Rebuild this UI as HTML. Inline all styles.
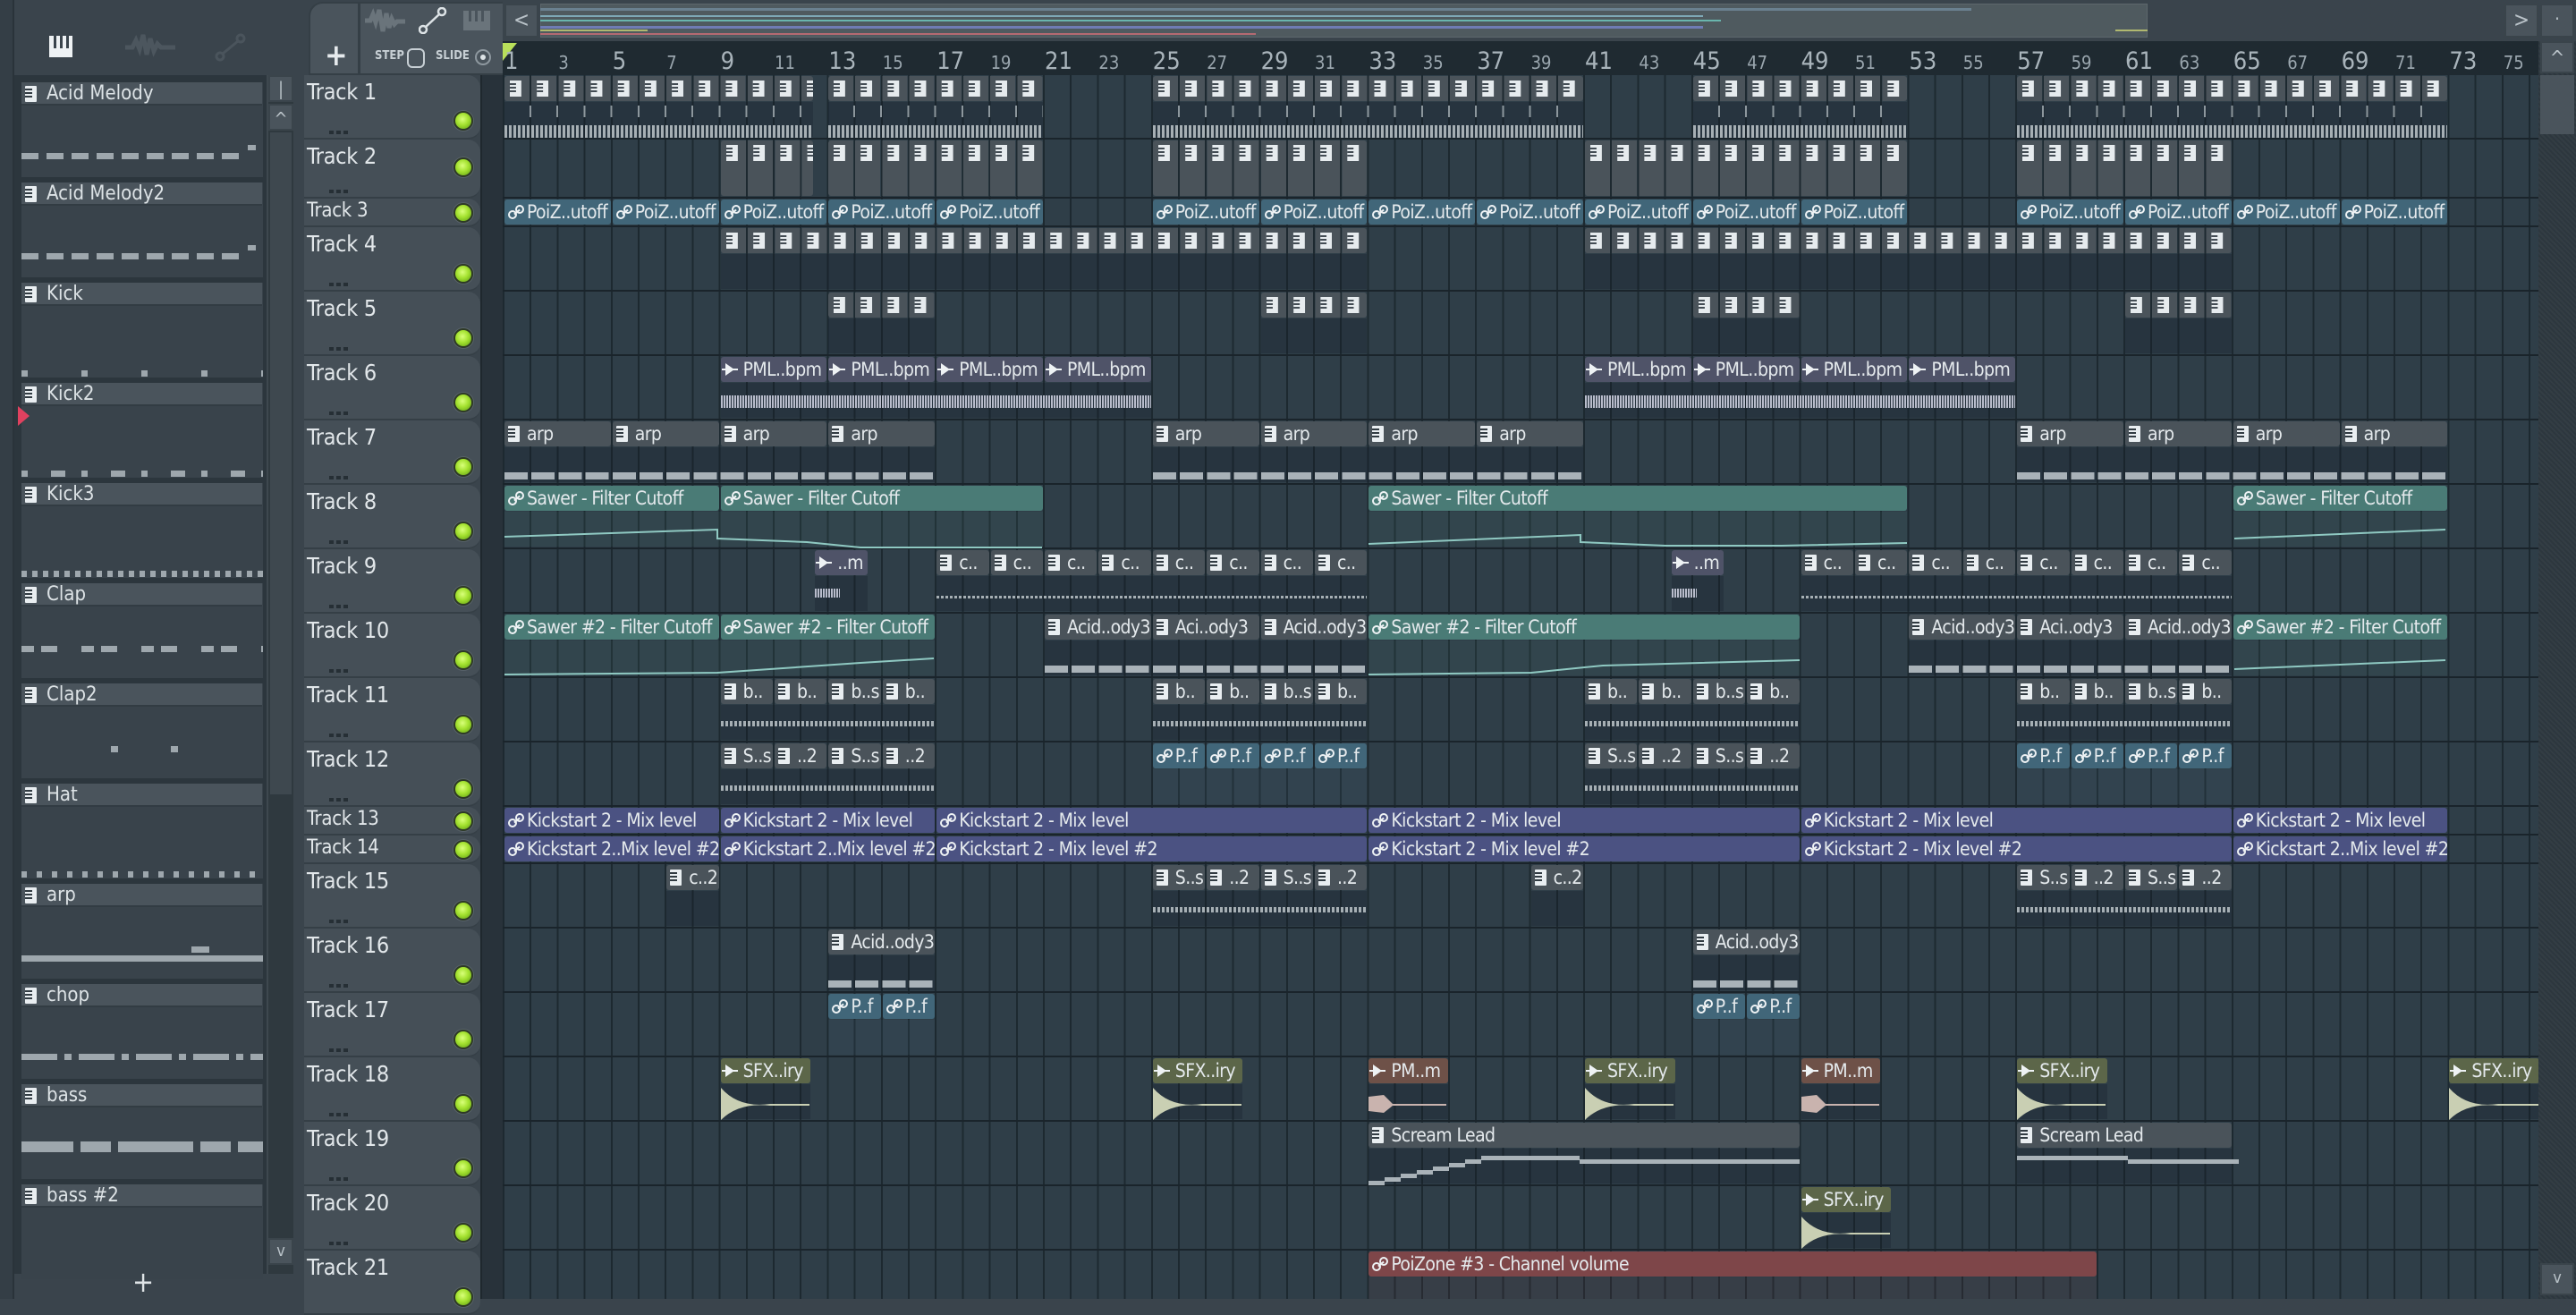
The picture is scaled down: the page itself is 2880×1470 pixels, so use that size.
<!DOCTYPE html>
<html><head><meta charset="utf-8">
<style>
*{box-sizing:border-box;margin:0;padding:0}
body{width:2880px;height:1452px;overflow:hidden;background:#3a444c;font-family:"Liberation Sans Narrow","DejaVu Sans Condensed","Liberation Sans",sans-serif;color:#dfe4e7;position:relative}
.abs{position:absolute}
#lp{left:0;top:0;width:335px;height:1452px;background:#3a444c}
#lp .edge{left:0;top:0;width:16px;height:1452px;background:#343e46;border-right:2px solid #2a333a}
#chan{left:16px;top:84px;width:282px;height:1340px;background:#2c363d}
.ch{position:absolute;left:8px;width:270px;height:106px;background:#39434b}
.ch .h{position:absolute;left:0;top:0;width:269px;height:26px;background:#4a545c;border-bottom:2px solid #323c43;font-size:22px;line-height:25px;padding-left:28px;color:#dde3e6}
.pi{position:absolute;left:4px;top:4px;width:13px;height:18px;background:#e9eef1;border-radius:1px}
.pi::before{content:"";position:absolute;left:0;top:3px;width:8px;height:12px;background:repeating-linear-gradient(#313b42 0 2px,transparent 2px 4px)}
.nt{position:absolute;left:0;height:7px}
#sb{left:298px;top:84px;width:30px;height:1340px;background:#2f393f;border-left:2px solid #3e484f}
.btn{position:absolute;background:#4a545c;border:2px solid #3a444b;color:#b9c2c8;text-align:center}
.th{position:absolute;left:340px;width:197px;background:#454f57;border-radius:0 14px 14px 0;border-bottom:2px solid #353f46}
.th span{position:absolute;left:3px;top:4px;font-size:25px;color:#e2e7ea;letter-spacing:-.3px}
.th.s span{top:1px;font-size:22px}
.led{position:absolute;left:507px;width:22px;height:22px;border-radius:50%;background:radial-gradient(circle at 45% 40%,#d9ff7a 0,#a4e230 45%,#5c9a12 100%);border:2px solid #2e3a26;box-shadow:0 0 0 1px #58626a}
.dots{position:absolute;left:28px;width:22px;height:4px;background:repeating-linear-gradient(90deg,#262f35 0 5px,transparent 5px 8px)}
#gap{left:537px;top:84px;width:25px;height:1368px;background:#28323a;border-left:2px solid #1f282e}
#grid{left:562px;top:84px;width:2276px;height:1368px;overflow:hidden;background:repeating-linear-gradient(90deg,#1d2930 0 2px,#2f3e48 2px 30.2px)}
.r{position:absolute;left:0;width:2276px;border-bottom:2px solid #1a242b}
.c{position:absolute;left:calc((var(--a) - 1)*30.2px + 2px);width:calc((var(--b) - var(--a))*30.2px - 2px);top:1px;height:28px;border-radius:3px;font-size:21px;line-height:28px;white-space:nowrap;overflow:hidden;padding-left:25px;color:#e4e9ec;letter-spacing:-.6px}
.bd{position:absolute;left:calc((var(--a) - 1)*30.2px + 2px);width:calc((var(--b) - var(--a))*30.2px - 2px);top:30px;bottom:1px;background:rgba(20,30,38,.28)}
.p{background:#4a535a}
.p .pi{left:4px;top:5px}
.pg{padding:0;background:repeating-linear-gradient(90deg,#4a535a 0 28px,transparent 28px 30.2px)}
.pg::after{content:"";position:absolute;left:6px;top:5px;right:0;height:18px;background:linear-gradient(90deg,#e6ebee 0 13px,transparent 13px 30.2px);background-size:30.2px 18px;background-repeat:repeat-x}
.pg::before{content:"";position:absolute;left:6px;top:8px;right:0;height:12px;z-index:1;background:linear-gradient(90deg,transparent 0 0,rgba(49,59,66,.9) 0 7px,transparent 7px 30.2px);background-size:30.2px 2px;background-repeat:repeat;-webkit-mask:repeating-linear-gradient(#000 0 2px,transparent 2px 4px);mask:repeating-linear-gradient(#000 0 2px,transparent 2px 4px)}
.au{background:#416679}
.sw{background:#4a7b76}
.ks{background:#4b5282}
.pm{background:#4f5368}
.sfx{background:#5c6649}
.br{background:#6e5148}
.red{background:#7e4649}
.ai{position:absolute;left:4px;top:6px;width:18px;height:16px}
.ai::before,.ai::after{content:"";position:absolute;width:6px;height:6px;border:2px solid #eef2f4;border-radius:50%}
.ai::before{left:0;bottom:0}.ai::after{right:0;top:0}
.ai i{position:absolute;left:6px;top:7px;width:8px;height:2px;background:#eef2f4;transform:rotate(-40deg)}
.wi{position:absolute;left:5px;top:7px;width:0;height:0;border-left:10px solid #eef2f4;border-top:7px solid transparent;border-bottom:7px solid transparent}
.wi::after{content:"";position:absolute;left:-14px;top:-1px;width:18px;height:2px;background:#eef2f4}
.stripe{position:absolute;left:calc((var(--a) - 1)*30.2px + 2px);width:calc((var(--b) - var(--a))*30.2px - 2px);height:14px;background:repeating-linear-gradient(90deg,#a6afb4 0 3px,transparent 3px 5px)}
.ticks{position:absolute;left:calc((var(--a) - 1)*30.2px + 2px);width:calc((var(--b) - var(--a))*30.2px - 2px);height:13px;background:repeating-linear-gradient(90deg,transparent 0 28px,#8d979d 28px 30px,transparent 30px 30.2px)}
.notes{position:absolute;left:calc((var(--a) - 1)*30.2px + 2px);width:calc((var(--b) - var(--a))*30.2px - 2px);height:8px;background:repeating-linear-gradient(90deg,#a9b2b8 0 26px,transparent 26px 30.2px)}
.wave{position:absolute;left:calc((var(--a) - 1)*30.2px + 2px);width:calc((var(--b) - var(--a))*30.2px - 2px);height:14px;background:repeating-linear-gradient(90deg,#b8bccb 0 2px,transparent 2px 3px)}
#ruler{left:562px;top:46px;width:2276px;height:38px;background:#1f2a31;overflow:hidden}
.n{position:absolute;left:calc((var(--n) - 1)*30.2px + 2px);bottom:2px;font-size:20px;color:#9aa6ae}
.n.b{font-size:27px;bottom:0;color:#a9b4bb}
#top{left:562px;top:0;width:2318px;height:46px;background:#3a444c}
</style></head><body>

<div id="lp" class="abs"><div class="edge abs"></div>
<div class="abs" style="left:55px;top:40px;width:26px;height:24px;background:#eef2f4"></div>
<div class="abs" style="left:60px;top:40px;width:3px;height:14px;background:#3a444c"></div>
<div class="abs" style="left:67px;top:40px;width:3px;height:14px;background:#3a444c"></div>
<div class="abs" style="left:74px;top:40px;width:3px;height:14px;background:#3a444c"></div>
<svg class="abs" style="left:140px;top:36px" width="56" height="34"><path d="M0 17h8l4-8 4 10 4-16 4 22 4-18 4 14 4-8 4 4h16" stroke="#4c565e" stroke-width="5" fill="none"/></svg>
<svg class="abs" style="left:240px;top:36px" width="36" height="34"><circle cx="6" cy="27" r="4" stroke="#4a545c" stroke-width="3" fill="none"/><circle cx="29" cy="7" r="4" stroke="#4a545c" stroke-width="3" fill="none"/><path d="M9 24L26 10" stroke="#4a545c" stroke-width="3"/></svg>
<div id="chan" class="abs">
<div class="ch" style="top:8px"><div class="h"><b class="pi"></b>Acid Melody</div><div class="nt" style="top:79px;width:250px;background:repeating-linear-gradient(90deg,#9ea7ad 0 19px,transparent 19px 28px)"></div><div class="abs" style="left:253px;top:70px;width:9px;height:6px;background:#9ea7ad"></div></div>
<div class="ch" style="top:120px"><div class="h"><b class="pi"></b>Acid Melody2</div><div class="nt" style="top:79px;width:250px;background:repeating-linear-gradient(90deg,#9ea7ad 0 19px,transparent 19px 28px)"></div><div class="abs" style="left:253px;top:70px;width:9px;height:6px;background:#9ea7ad"></div></div>
<div class="ch" style="top:232px"><div class="h"><b class="pi"></b>Kick</div><div class="nt" style="top:98px;width:270px;background:repeating-linear-gradient(90deg,#9ea7ad 0 7px,transparent 7px 67px)"></div></div>
<div class="ch" style="top:344px"><div class="h"><b class="pi"></b>Kick2</div><div class="nt" style="top:98px;width:270px;background:repeating-linear-gradient(90deg,#9ea7ad 0 7px,transparent 7px 33px,#9ea7ad 33px 49px,transparent 49px 67px)"></div><div class="abs" style="left:-4px;top:26px;width:0;height:0;border-left:13px solid #e0415f;border-top:11px solid transparent;border-bottom:11px solid transparent"></div></div>
<div class="ch" style="top:456px"><div class="h"><b class="pi"></b>Kick3</div><div class="nt" style="top:98px;width:270px;background:repeating-linear-gradient(90deg,#9ea7ad 0 6px,transparent 6px 12px)"></div></div>
<div class="ch" style="top:568px"><div class="h"><b class="pi"></b>Clap</div><div class="nt" style="top:70px;width:270px;background:repeating-linear-gradient(90deg,#9ea7ad 0 14px,transparent 14px 22px,#9ea7ad 22px 40px,transparent 40px 67px)"></div></div>
<div class="ch" style="top:680px"><div class="h"><b class="pi"></b>Clap2</div><div class="nt" style="top:70px;left:100px;width:130px;background:repeating-linear-gradient(90deg,#9ea7ad 0 8px,transparent 8px 67px)"></div></div>
<div class="ch" style="top:792px"><div class="h"><b class="pi"></b>Hat</div><div class="nt" style="top:98px;width:270px;background:repeating-linear-gradient(90deg,#9ea7ad 0 6px,transparent 6px 17px)"></div></div>
<div class="ch" style="top:904px"><div class="h"><b class="pi"></b>arp</div><div class="nt" style="top:80px;width:270px;background:#9ea7ad"></div><div class="abs" style="left:190px;top:70px;width:20px;height:7px;background:#9ea7ad"></div></div>
<div class="ch" style="top:1016px"><div class="h"><b class="pi"></b>chop</div><div class="nt" style="top:78px;width:270px;background:repeating-linear-gradient(90deg,#9ea7ad 0 40px,transparent 40px 48px,#9ea7ad 48px 56px,transparent 56px 64px)"></div></div>
<div class="ch" style="top:1128px"><div class="h"><b class="pi"></b>bass</div><div class="nt" style="top:64px;width:270px;height:12px;background:repeating-linear-gradient(90deg,#9ea7ad 0 58px,transparent 58px 66px,#9ea7ad 66px 100px,transparent 100px 108px,#9ea7ad 108px 134px)"></div></div>
<div class="ch" style="top:1240px"><div class="h"><b class="pi"></b>bass #2</div></div>
</div>
<div id="sb" class="abs">
<div class="btn" style="left:0;top:0;width:28px;height:30px;font-size:20px;line-height:26px">|</div>
<div class="btn" style="left:0;top:32px;width:28px;height:30px;font-size:20px;line-height:30px">^</div>
<div class="abs" style="left:2px;top:64px;width:24px;height:740px;background:#3e484f"></div>
<div class="btn" style="left:0;top:1300px;width:28px;height:30px;font-size:18px;line-height:26px">v</div>
</div>
<div class="abs" style="left:148px;top:1418px;font-size:32px;color:#dfe4e7;line-height:30px">+</div>
</div>

<div class="abs" style="left:345px;top:2px;width:220px;height:82px;background:#4a545c;border-radius:16px 0 0 0;border:2px solid #353f46"></div>
<div class="abs" style="left:400px;top:4px;width:3px;height:80px;background:#353f46"></div>
<div class="abs" style="left:363px;top:42px;font-size:34px;font-weight:bold;color:#e6eaed">+</div>
<svg class="abs" style="left:408px;top:8px" width="46" height="30"><path d="M0 15h6l3-7 3 9 4-14 4 24 4-20 3 16 3-10 3 6 3-3h9" stroke="#6a747b" stroke-width="5" fill="none"/></svg>
<svg class="abs" style="left:468px;top:8px" width="32" height="30"><circle cx="5" cy="25" r="4" stroke="#dde3e6" stroke-width="2.5" fill="none"/><circle cx="26" cy="5" r="4" stroke="#dde3e6" stroke-width="2.5" fill="none"/><path d="M8 22L23 8" stroke="#dde3e6" stroke-width="2.5"/></svg>
<div class="abs" style="left:518px;top:12px;width:30px;height:22px;background:#6a747b"></div>
<div class="abs" style="left:524px;top:12px;width:3px;height:12px;background:#4a545c"></div>
<div class="abs" style="left:531px;top:12px;width:3px;height:12px;background:#4a545c"></div>
<div class="abs" style="left:538px;top:12px;width:3px;height:12px;background:#4a545c"></div>
<div class="abs" style="left:419px;top:55px;font-size:13px;font-weight:bold;color:#c7cfd4">STEP</div>
<div class="abs" style="left:455px;top:54px;width:20px;height:22px;border:2px solid #c7cfd4;border-radius:6px"></div>
<div class="abs" style="left:487px;top:55px;font-size:13px;font-weight:bold;color:#c7cfd4">SLIDE</div>
<div class="abs" style="left:531px;top:55px;width:18px;height:18px;border:2px solid #8e989f;border-radius:50%"><div class="abs" style="left:4px;top:4px;width:6px;height:6px;border-radius:50%;background:#dde3e6"></div></div>

<div id="top" class="abs">
<div class="btn" style="left:2px;top:4px;width:38px;height:38px;font-size:24px;line-height:32px">&lt;</div>
<div class="abs" style="left:42px;top:4px;width:1797px;height:38px;background:#4f5a5f;border:1px solid #5d676c"></div>
<div class="abs" style="left:42px;top:9px;width:1600px;height:3px;background:#6a808f"></div>
<div class="abs" style="left:42px;top:17px;width:1300px;height:2px;background:#7ea8b6"></div>
<div class="abs" style="left:42px;top:22px;width:1320px;height:2px;background:#69b5ad"></div>
<div class="abs" style="left:42px;top:29px;width:1300px;height:3px;background:#6f7cb4"></div>
<div class="abs" style="left:42px;top:37px;width:800px;height:2px;background:#b46a72"></div>
<div class="abs" style="left:42px;top:33px;width:120px;height:2px;background:#b0b870"></div>
<div class="abs" style="left:1803px;top:33px;width:36px;height:2px;background:#b0b870"></div>
<div class="btn" style="left:2238px;top:4px;width:38px;height:38px;font-size:24px;line-height:32px">&gt;</div>
<div class="btn" style="left:2278px;top:4px;width:38px;height:38px;font-size:20px;line-height:30px">·</div>
</div>
<div class="abs" style="left:2838px;top:46px;width:42px;height:1406px;background:repeating-linear-gradient(45deg,#2d373e 0 2px,#333d44 2px 4px)"></div>
<div class="btn" style="left:2840px;top:46px;width:38px;height:36px;font-size:22px;line-height:36px">^</div>
<div class="abs" style="left:2840px;top:84px;width:38px;height:66px;background:#4a545c"></div>
<div class="btn" style="left:2840px;top:1412px;width:38px;height:36px;font-size:18px;line-height:30px">v</div>

<div id="ruler" class="abs">
<div class="abs" style="left:0;top:2px;width:0;height:0;border-top:20px solid #b9e05a;border-right:16px solid transparent"></div>
<span class="n b" style="--n:1">1</span><span class="n" style="--n:3">3</span><span class="n b" style="--n:5">5</span><span class="n" style="--n:7">7</span><span class="n b" style="--n:9">9</span><span class="n" style="--n:11">11</span><span class="n b" style="--n:13">13</span><span class="n" style="--n:15">15</span><span class="n b" style="--n:17">17</span><span class="n" style="--n:19">19</span><span class="n b" style="--n:21">21</span><span class="n" style="--n:23">23</span><span class="n b" style="--n:25">25</span><span class="n" style="--n:27">27</span><span class="n b" style="--n:29">29</span><span class="n" style="--n:31">31</span><span class="n b" style="--n:33">33</span><span class="n" style="--n:35">35</span><span class="n b" style="--n:37">37</span><span class="n" style="--n:39">39</span><span class="n b" style="--n:41">41</span><span class="n" style="--n:43">43</span><span class="n b" style="--n:45">45</span><span class="n" style="--n:47">47</span><span class="n b" style="--n:49">49</span><span class="n" style="--n:51">51</span><span class="n b" style="--n:53">53</span><span class="n" style="--n:55">55</span><span class="n b" style="--n:57">57</span><span class="n" style="--n:59">59</span><span class="n b" style="--n:61">61</span><span class="n" style="--n:63">63</span><span class="n b" style="--n:65">65</span><span class="n" style="--n:67">67</span><span class="n b" style="--n:69">69</span><span class="n" style="--n:71">71</span><span class="n b" style="--n:73">73</span><span class="n" style="--n:75">75</span>
</div>

<div id="gap" class="abs"></div>
<div class="th" style="top:84px;height:72px"><span>Track 1</span><div class="dots" style="top:62px"></div></div><div class="led" style="top:124px"></div>
<div class="th" style="top:156px;height:66px"><span>Track 2</span><div class="dots" style="top:56px"></div></div><div class="led" style="top:176px"></div>
<div class="th s" style="top:222px;height:32px"><span>Track 3</span></div><div class="led" style="top:227px"></div>
<div class="th" style="top:254px;height:72px"><span>Track 4</span><div class="dots" style="top:62px"></div></div><div class="led" style="top:295px"></div>
<div class="th" style="top:326px;height:72px"><span>Track 5</span><div class="dots" style="top:62px"></div></div><div class="led" style="top:367px"></div>
<div class="th" style="top:398px;height:72px"><span>Track 6</span><div class="dots" style="top:62px"></div></div><div class="led" style="top:439px"></div>
<div class="th" style="top:470px;height:72px"><span>Track 7</span><div class="dots" style="top:62px"></div></div><div class="led" style="top:511px"></div>
<div class="th" style="top:542px;height:72px"><span>Track 8</span><div class="dots" style="top:62px"></div></div><div class="led" style="top:583px"></div>
<div class="th" style="top:614px;height:72px"><span>Track 9</span><div class="dots" style="top:62px"></div></div><div class="led" style="top:655px"></div>
<div class="th" style="top:686px;height:72px"><span>Track 10</span><div class="dots" style="top:62px"></div></div><div class="led" style="top:727px"></div>
<div class="th" style="top:758px;height:72px"><span>Track 11</span><div class="dots" style="top:62px"></div></div><div class="led" style="top:799px"></div>
<div class="th" style="top:830px;height:72px"><span>Track 12</span><div class="dots" style="top:62px"></div></div><div class="led" style="top:871px"></div>
<div class="th s" style="top:902px;height:32px"><span>Track 13</span></div><div class="led" style="top:907px"></div>
<div class="th s" style="top:934px;height:32px"><span>Track 14</span></div><div class="led" style="top:939px"></div>
<div class="th" style="top:966px;height:72px"><span>Track 15</span><div class="dots" style="top:62px"></div></div><div class="led" style="top:1007px"></div>
<div class="th" style="top:1038px;height:72px"><span>Track 16</span><div class="dots" style="top:62px"></div></div><div class="led" style="top:1079px"></div>
<div class="th" style="top:1110px;height:72px"><span>Track 17</span><div class="dots" style="top:62px"></div></div><div class="led" style="top:1151px"></div>
<div class="th" style="top:1182px;height:72px"><span>Track 18</span><div class="dots" style="top:62px"></div></div><div class="led" style="top:1223px"></div>
<div class="th" style="top:1254px;height:72px"><span>Track 19</span><div class="dots" style="top:62px"></div></div><div class="led" style="top:1295px"></div>
<div class="th" style="top:1326px;height:72px"><span>Track 20</span><div class="dots" style="top:62px"></div></div><div class="led" style="top:1367px"></div>
<div class="th" style="top:1398px;height:72px"><span>Track 21</span></div><div class="led" style="top:1439px"></div>

<div id="grid" class="abs">
<div class="r" style="top:0;height:72px">
<div class="bd" style="--a:1;--b:12.5"></div><div class="bd" style="--a:13;--b:21"></div><div class="bd" style="--a:25;--b:41"></div><div class="bd" style="--a:45;--b:53"></div><div class="bd" style="--a:57;--b:73"></div>
<div class="c pg" style="--a:1;--b:12.5"></div><div class="c pg" style="--a:13;--b:21"></div><div class="c pg" style="--a:25;--b:41"></div><div class="c pg" style="--a:45;--b:53"></div><div class="c pg" style="--a:57;--b:73"></div>
<div class="ticks" style="--a:1;--b:12.5;top:34px"></div><div class="ticks" style="--a:13;--b:21;top:34px"></div><div class="ticks" style="--a:25;--b:41;top:34px"></div><div class="ticks" style="--a:45;--b:53;top:34px"></div><div class="ticks" style="--a:57;--b:73;top:34px"></div>
<div class="stripe" style="--a:1;--b:12.5;top:56px"></div><div class="stripe" style="--a:13;--b:21;top:56px"></div><div class="stripe" style="--a:25;--b:41;top:56px"></div><div class="stripe" style="--a:45;--b:53;top:56px"></div><div class="stripe" style="--a:57;--b:73;top:56px"></div>
</div>
<div class="r" style="top:72px;height:66px">
<div class="c pg" style="--a:9;--b:12.5;height:62px"></div><div class="c pg" style="--a:13;--b:21;height:62px"></div><div class="c pg" style="--a:25;--b:33;height:62px"></div><div class="c pg" style="--a:41;--b:53;height:62px"></div><div class="c pg" style="--a:57;--b:65;height:62px"></div>
</div>
<div class="r" style="top:138px;height:32px">
<div class="c au" style="--a:1;--b:5"><b class="ai"><i></i></b>PoiZ..utoff</div><div class="c au" style="--a:5;--b:9"><b class="ai"><i></i></b>PoiZ..utoff</div><div class="c au" style="--a:9;--b:13"><b class="ai"><i></i></b>PoiZ..utoff</div><div class="c au" style="--a:13;--b:17"><b class="ai"><i></i></b>PoiZ..utoff</div><div class="c au" style="--a:17;--b:21"><b class="ai"><i></i></b>PoiZ..utoff</div>
<div class="c au" style="--a:25;--b:29"><b class="ai"><i></i></b>PoiZ..utoff</div><div class="c au" style="--a:29;--b:33"><b class="ai"><i></i></b>PoiZ..utoff</div><div class="c au" style="--a:33;--b:37"><b class="ai"><i></i></b>PoiZ..utoff</div><div class="c au" style="--a:37;--b:41"><b class="ai"><i></i></b>PoiZ..utoff</div><div class="c au" style="--a:41;--b:45"><b class="ai"><i></i></b>PoiZ..utoff</div><div class="c au" style="--a:45;--b:49"><b class="ai"><i></i></b>PoiZ..utoff</div><div class="c au" style="--a:49;--b:53"><b class="ai"><i></i></b>PoiZ..utoff</div>
<div class="c au" style="--a:57;--b:61"><b class="ai"><i></i></b>PoiZ..utoff</div><div class="c au" style="--a:61;--b:65"><b class="ai"><i></i></b>PoiZ..utoff</div><div class="c au" style="--a:65;--b:69"><b class="ai"><i></i></b>PoiZ..utoff</div><div class="c au" style="--a:69;--b:73"><b class="ai"><i></i></b>PoiZ..utoff</div>
</div>
<div class="r" style="top:170px;height:72px">
<div class="bd" style="--a:9;--b:33"></div><div class="bd" style="--a:41;--b:65"></div>
<div class="c pg" style="--a:9;--b:33"></div><div class="c pg" style="--a:41;--b:65"></div>
</div>
<div class="r" style="top:242px;height:72px">
<div class="bd" style="--a:13;--b:17"></div><div class="bd" style="--a:29;--b:33"></div><div class="bd" style="--a:45;--b:49"></div><div class="bd" style="--a:61;--b:65"></div>
<div class="c pg" style="--a:13;--b:17"></div><div class="c pg" style="--a:29;--b:33"></div><div class="c pg" style="--a:45;--b:49"></div><div class="c pg" style="--a:61;--b:65"></div>
</div>
<div class="r" style="top:314px;height:72px">
<div class="bd" style="--a:9;--b:25"></div><div class="bd" style="--a:41;--b:57"></div>
<div class="c pm" style="--a:9;--b:13"><b class="wi"></b>PML..bpm</div><div class="c pm" style="--a:13;--b:17"><b class="wi"></b>PML..bpm</div><div class="c pm" style="--a:17;--b:21"><b class="wi"></b>PML..bpm</div><div class="c pm" style="--a:21;--b:25"><b class="wi"></b>PML..bpm</div>
<div class="c pm" style="--a:41;--b:45"><b class="wi"></b>PML..bpm</div><div class="c pm" style="--a:45;--b:49"><b class="wi"></b>PML..bpm</div><div class="c pm" style="--a:49;--b:53"><b class="wi"></b>PML..bpm</div><div class="c pm" style="--a:53;--b:57"><b class="wi"></b>PML..bpm</div>
<div class="wave" style="--a:9;--b:25;top:44px"></div><div class="wave" style="--a:41;--b:57;top:44px"></div>
</div>
<div class="r" style="top:386px;height:72px">
<div class="bd" style="--a:1;--b:17"></div><div class="bd" style="--a:25;--b:41"></div><div class="bd" style="--a:57;--b:73"></div>
<div class="c p" style="--a:1;--b:5"><b class="pi"></b>arp</div><div class="c p" style="--a:5;--b:9"><b class="pi"></b>arp</div><div class="c p" style="--a:9;--b:13"><b class="pi"></b>arp</div><div class="c p" style="--a:13;--b:17"><b class="pi"></b>arp</div>
<div class="c p" style="--a:25;--b:29"><b class="pi"></b>arp</div><div class="c p" style="--a:29;--b:33"><b class="pi"></b>arp</div><div class="c p" style="--a:33;--b:37"><b class="pi"></b>arp</div><div class="c p" style="--a:37;--b:41"><b class="pi"></b>arp</div>
<div class="c p" style="--a:57;--b:61"><b class="pi"></b>arp</div><div class="c p" style="--a:61;--b:65"><b class="pi"></b>arp</div><div class="c p" style="--a:65;--b:69"><b class="pi"></b>arp</div><div class="c p" style="--a:69;--b:73"><b class="pi"></b>arp</div>
<div class="notes" style="--a:1;--b:17;top:58px"></div><div class="notes" style="--a:25;--b:41;top:58px"></div><div class="notes" style="--a:57;--b:73;top:58px"></div>
</div>
<div class="r" style="top:458px;height:72px">
<div class="bd" style="--a:1;--b:21;background:rgba(74,123,118,.12)"></div><div class="bd" style="--a:33;--b:53;background:rgba(74,123,118,.12)"></div><div class="bd" style="--a:65;--b:73;background:rgba(74,123,118,.12)"></div>
<div class="c sw" style="--a:1;--b:9"><b class="ai"><i></i></b>Sawer - Filter Cutoff</div><div class="c sw" style="--a:9;--b:21"><b class="ai"><i></i></b>Sawer - Filter Cutoff</div><div class="c sw" style="--a:33;--b:53"><b class="ai"><i></i></b>Sawer - Filter Cutoff</div><div class="c sw" style="--a:65;--b:73"><b class="ai"><i></i></b>Sawer - Filter Cutoff</div>
<svg class="abs" style="left:0;top:30px" width="2276" height="42"><path d="M2 28L240 20V30L340 34L400 40L603 40M968 36L1205 26V34L1300 38L1430 38L1570 35M1936 30L2172 20" stroke="#8fc9c2" stroke-width="2" fill="none"/></svg>
</div>
<div class="r" style="top:530px;height:72px">
<div class="bd" style="--a:12.5;--b:14.5"></div><div class="bd" style="--a:17;--b:33"></div><div class="bd" style="--a:44.2;--b:46.2"></div><div class="bd" style="--a:49;--b:65"></div>
<div class="c pm" style="--a:12.5;--b:14.5"><b class="wi"></b>..m</div>
<div class="c p" style="--a:17;--b:19"><b class="pi"></b>c..</div><div class="c p" style="--a:19;--b:21"><b class="pi"></b>c..</div><div class="c p" style="--a:21;--b:23"><b class="pi"></b>c..</div><div class="c p" style="--a:23;--b:25"><b class="pi"></b>c..</div><div class="c p" style="--a:25;--b:27"><b class="pi"></b>c..</div><div class="c p" style="--a:27;--b:29"><b class="pi"></b>c..</div><div class="c p" style="--a:29;--b:31"><b class="pi"></b>c..</div><div class="c p" style="--a:31;--b:33"><b class="pi"></b>c..</div>
<div class="c pm" style="--a:44.2;--b:46.2"><b class="wi"></b>..m</div>
<div class="c p" style="--a:49;--b:51"><b class="pi"></b>c..</div><div class="c p" style="--a:51;--b:53"><b class="pi"></b>c..</div><div class="c p" style="--a:53;--b:55"><b class="pi"></b>c..</div><div class="c p" style="--a:55;--b:57"><b class="pi"></b>c..</div><div class="c p" style="--a:57;--b:59"><b class="pi"></b>c..</div><div class="c p" style="--a:59;--b:61"><b class="pi"></b>c..</div><div class="c p" style="--a:61;--b:63"><b class="pi"></b>c..</div><div class="c p" style="--a:63;--b:65"><b class="pi"></b>c..</div>
<div class="stripe" style="--a:17;--b:33;top:52px;height:3px"></div><div class="stripe" style="--a:49;--b:65;top:52px;height:3px"></div>
<div class="wave" style="--a:12.5;--b:13.5;top:44px;height:10px"></div><div class="wave" style="--a:44.2;--b:45.2;top:44px;height:10px"></div>
</div>
<div class="r" style="top:602px;height:72px">
<div class="bd" style="--a:1;--b:17;background:rgba(74,123,118,.12)"></div><div class="bd" style="--a:21;--b:33"></div><div class="bd" style="--a:33;--b:49;background:rgba(74,123,118,.12)"></div><div class="bd" style="--a:53;--b:65"></div><div class="bd" style="--a:65;--b:73;background:rgba(74,123,118,.12)"></div>
<div class="c sw" style="--a:1;--b:9"><b class="ai"><i></i></b>Sawer #2 - Filter Cutoff</div><div class="c sw" style="--a:9;--b:17"><b class="ai"><i></i></b>Sawer #2 - Filter Cutoff</div>
<div class="c p" style="--a:21;--b:25"><b class="pi"></b>Acid..ody3</div><div class="c p" style="--a:25;--b:29"><b class="pi"></b>Aci..ody3</div><div class="c p" style="--a:29;--b:33"><b class="pi"></b>Acid..ody3</div>
<div class="c sw" style="--a:33;--b:49"><b class="ai"><i></i></b>Sawer #2 - Filter Cutoff</div>
<div class="c p" style="--a:53;--b:57"><b class="pi"></b>Acid..ody3</div><div class="c p" style="--a:57;--b:61"><b class="pi"></b>Aci..ody3</div><div class="c p" style="--a:61;--b:65"><b class="pi"></b>Acid..ody3</div>
<div class="c sw" style="--a:65;--b:73"><b class="ai"><i></i></b>Sawer #2 - Filter Cutoff</div>
<div class="notes" style="--a:21;--b:33;top:58px"></div><div class="notes" style="--a:53;--b:65;top:58px"></div>
<svg class="abs" style="left:0;top:30px" width="2276" height="42"><path d="M2 38L240 36L400 25L482 20M968 38L1150 36L1230 28L1450 22M1936 32L2172 22" stroke="#8fc9c2" stroke-width="2" fill="none"/></svg>
</div>
<div class="r" style="top:674px;height:72px">
<div class="bd" style="--a:9;--b:17"></div><div class="bd" style="--a:25;--b:33"></div><div class="bd" style="--a:41;--b:49"></div><div class="bd" style="--a:57;--b:65"></div>
<div class="c p" style="--a:9;--b:11"><b class="pi"></b>b..</div><div class="c p" style="--a:11;--b:13"><b class="pi"></b>b..</div><div class="c p" style="--a:13;--b:15"><b class="pi"></b>b..s</div><div class="c p" style="--a:15;--b:17"><b class="pi"></b>b..</div>
<div class="c p" style="--a:25;--b:27"><b class="pi"></b>b..</div><div class="c p" style="--a:27;--b:29"><b class="pi"></b>b..</div><div class="c p" style="--a:29;--b:31"><b class="pi"></b>b..s</div><div class="c p" style="--a:31;--b:33"><b class="pi"></b>b..</div>
<div class="c p" style="--a:41;--b:43"><b class="pi"></b>b..</div><div class="c p" style="--a:43;--b:45"><b class="pi"></b>b..</div><div class="c p" style="--a:45;--b:47"><b class="pi"></b>b..s</div><div class="c p" style="--a:47;--b:49"><b class="pi"></b>b..</div>
<div class="c p" style="--a:57;--b:59"><b class="pi"></b>b..</div><div class="c p" style="--a:59;--b:61"><b class="pi"></b>b..</div><div class="c p" style="--a:61;--b:63"><b class="pi"></b>b..s</div><div class="c p" style="--a:63;--b:65"><b class="pi"></b>b..</div>
<div class="stripe" style="--a:9;--b:17;top:48px;height:6px"></div><div class="stripe" style="--a:25;--b:33;top:48px;height:6px"></div><div class="stripe" style="--a:41;--b:49;top:48px;height:6px"></div><div class="stripe" style="--a:57;--b:65;top:48px;height:6px"></div>
</div>
<div class="r" style="top:746px;height:72px">
<div class="bd" style="--a:9;--b:17"></div><div class="bd" style="--a:25;--b:33;background:rgba(65,102,121,.15)"></div><div class="bd" style="--a:41;--b:49"></div><div class="bd" style="--a:57;--b:65;background:rgba(65,102,121,.15)"></div>
<div class="c p" style="--a:9;--b:11"><b class="pi"></b>S..s</div><div class="c p" style="--a:11;--b:13"><b class="pi"></b>..2</div><div class="c p" style="--a:13;--b:15"><b class="pi"></b>S..s</div><div class="c p" style="--a:15;--b:17"><b class="pi"></b>..2</div>
<div class="c au" style="--a:25;--b:27"><b class="ai"><i></i></b>P..f</div><div class="c au" style="--a:27;--b:29"><b class="ai"><i></i></b>P..f</div><div class="c au" style="--a:29;--b:31"><b class="ai"><i></i></b>P..f</div><div class="c au" style="--a:31;--b:33"><b class="ai"><i></i></b>P..f</div>
<div class="c p" style="--a:41;--b:43"><b class="pi"></b>S..s</div><div class="c p" style="--a:43;--b:45"><b class="pi"></b>..2</div><div class="c p" style="--a:45;--b:47"><b class="pi"></b>S..s</div><div class="c p" style="--a:47;--b:49"><b class="pi"></b>..2</div>
<div class="c au" style="--a:57;--b:59"><b class="ai"><i></i></b>P..f</div><div class="c au" style="--a:59;--b:61"><b class="ai"><i></i></b>P..f</div><div class="c au" style="--a:61;--b:63"><b class="ai"><i></i></b>P..f</div><div class="c au" style="--a:63;--b:65"><b class="ai"><i></i></b>P..f</div>
<div class="stripe" style="--a:9;--b:17;top:48px;height:6px"></div><div class="stripe" style="--a:41;--b:49;top:48px;height:6px"></div>
</div>
<div class="r" style="top:818px;height:32px">
<div class="c ks" style="--a:1;--b:9"><b class="ai"><i></i></b>Kickstart 2 - Mix level</div><div class="c ks" style="--a:9;--b:17"><b class="ai"><i></i></b>Kickstart 2 - Mix level</div><div class="c ks" style="--a:17;--b:33"><b class="ai"><i></i></b>Kickstart 2 - Mix level</div><div class="c ks" style="--a:33;--b:49"><b class="ai"><i></i></b>Kickstart 2 - Mix level</div><div class="c ks" style="--a:49;--b:65"><b class="ai"><i></i></b>Kickstart 2 - Mix level</div><div class="c ks" style="--a:65;--b:73"><b class="ai"><i></i></b>Kickstart 2 - Mix level</div>
</div>
<div class="r" style="top:850px;height:32px">
<div class="c ks" style="--a:1;--b:9"><b class="ai"><i></i></b>Kickstart 2..Mix level #2</div><div class="c ks" style="--a:9;--b:17"><b class="ai"><i></i></b>Kickstart 2..Mix level #2</div><div class="c ks" style="--a:17;--b:33"><b class="ai"><i></i></b>Kickstart 2 - Mix level #2</div><div class="c ks" style="--a:33;--b:49"><b class="ai"><i></i></b>Kickstart 2 - Mix level #2</div><div class="c ks" style="--a:49;--b:65"><b class="ai"><i></i></b>Kickstart 2 - Mix level #2</div><div class="c ks" style="--a:65;--b:73"><b class="ai"><i></i></b>Kickstart 2..Mix level #2</div>
</div>
<div class="r" style="top:882px;height:72px">
<div class="bd" style="--a:7;--b:9"></div><div class="bd" style="--a:25;--b:33"></div><div class="bd" style="--a:39;--b:41"></div><div class="bd" style="--a:57;--b:65"></div>
<div class="c p" style="--a:7;--b:9"><b class="pi"></b>c..2</div>
<div class="c p" style="--a:25;--b:27"><b class="pi"></b>S..s</div><div class="c p" style="--a:27;--b:29"><b class="pi"></b>..2</div><div class="c p" style="--a:29;--b:31"><b class="pi"></b>S..s</div><div class="c p" style="--a:31;--b:33"><b class="pi"></b>..2</div>
<div class="c p" style="--a:39;--b:41"><b class="pi"></b>c..2</div>
<div class="c p" style="--a:57;--b:59"><b class="pi"></b>S..s</div><div class="c p" style="--a:59;--b:61"><b class="pi"></b>..2</div><div class="c p" style="--a:61;--b:63"><b class="pi"></b>S..s</div><div class="c p" style="--a:63;--b:65"><b class="pi"></b>..2</div>
<div class="stripe" style="--a:25;--b:33;top:48px;height:6px"></div><div class="stripe" style="--a:57;--b:65;top:48px;height:6px"></div>
</div>
<div class="r" style="top:954px;height:72px">
<div class="bd" style="--a:13;--b:17"></div><div class="bd" style="--a:45;--b:49"></div>
<div class="c p" style="--a:13;--b:17"><b class="pi"></b>Acid..ody3</div><div class="c p" style="--a:45;--b:49"><b class="pi"></b>Acid..ody3</div>
<div class="notes" style="--a:13;--b:17;top:58px"></div><div class="notes" style="--a:45;--b:49;top:58px"></div>
</div>
<div class="r" style="top:1026px;height:72px">
<div class="bd" style="--a:13;--b:17;background:rgba(65,102,121,.15)"></div><div class="bd" style="--a:45;--b:49;background:rgba(65,102,121,.15)"></div>
<div class="c au" style="--a:13;--b:15"><b class="ai"><i></i></b>P..f</div><div class="c au" style="--a:15;--b:17"><b class="ai"><i></i></b>P..f</div><div class="c au" style="--a:45;--b:47"><b class="ai"><i></i></b>P..f</div><div class="c au" style="--a:47;--b:49"><b class="ai"><i></i></b>P..f</div>
</div>
<div class="r" style="top:1098px;height:72px">
<div class="bd" style="--a:9;--b:12.4"></div><div class="bd" style="--a:25;--b:28.4"></div><div class="bd" style="--a:33;--b:36"></div><div class="bd" style="--a:41;--b:44.4"></div><div class="bd" style="--a:49;--b:52"></div><div class="bd" style="--a:57;--b:60.4"></div><div class="bd" style="--a:73;--b:76.4"></div>
<div class="c sfx" style="--a:9;--b:12.4"><b class="wi"></b>SFX..iry</div><div class="c sfx" style="--a:25;--b:28.4"><b class="wi"></b>SFX..iry</div><div class="c br" style="--a:33;--b:36"><b class="wi"></b>PM..m</div><div class="c sfx" style="--a:41;--b:44.4"><b class="wi"></b>SFX..iry</div><div class="c br" style="--a:49;--b:52"><b class="wi"></b>PM..m</div><div class="c sfx" style="--a:57;--b:60.4"><b class="wi"></b>SFX..iry</div><div class="c sfx" style="--a:73;--b:76.4"><b class="wi"></b>SFX..iry</div>
<svg class="abs" style="left:0;top:32px" width="2276" height="40"><g fill="#c9cfb3"><path d="M244 2Q264 25 299 20H343V22H299Q264 18 244 38Z"/><path d="M727 2Q747 25 782 20H826V22H782Q747 18 727 38Z"/><path d="M1210 2Q1230 25 1265 20H1309V22H1265Q1230 18 1210 38Z"/><path d="M1693 2Q1713 25 1748 20H1792V22H1748Q1713 18 1693 38Z"/><path d="M2176 2Q2196 25 2231 20H2276V22H2231Q2196 18 2176 38Z"/></g><g fill="#c9b3ae"><path d="M968 12L985 10L995 20H1055V22H995L985 30L968 28Z"/><path d="M1452 12L1469 10L1479 20H1539V22H1479L1469 30L1452 28Z"/></g></svg>
</div>
<div class="r" style="top:1170px;height:72px">
<div class="bd" style="--a:33;--b:49"></div><div class="bd" style="--a:57;--b:65"></div>
<div class="c p" style="--a:33;--b:49"><b class="pi"></b>Scream Lead</div><div class="c p" style="--a:57;--b:65"><b class="pi"></b>Scream Lead</div>
<svg class="abs" style="left:0;top:30px" width="2276" height="42"><g fill="#a9b2b8"><rect x="968" y="36" width="18" height="5"/><rect x="986" y="32" width="18" height="5"/><rect x="1004" y="28" width="18" height="5"/><rect x="1022" y="24" width="18" height="5"/><rect x="1040" y="20" width="18" height="5"/><rect x="1058" y="16" width="18" height="5"/><rect x="1076" y="12" width="18" height="5"/><rect x="1094" y="8" width="110" height="5"/><rect x="1204" y="12" width="246" height="5"/><rect x="1693" y="8" width="124" height="5"/><rect x="1817" y="12" width="124" height="5"/></g></svg>
</div>
<div class="r" style="top:1242px;height:72px">
<div class="bd" style="--a:49;--b:52.4"></div>
<div class="c sfx" style="--a:49;--b:52.4"><b class="wi"></b>SFX..iry</div>
<svg class="abs" style="left:0;top:32px" width="2276" height="40"><path d="M1452 2Q1472 25 1507 20H1551V22H1507Q1472 18 1452 38Z" fill="#c9cfb3"/></svg>
</div>
<div class="r" style="top:1314px;height:72px">
<div class="bd" style="--a:33;--b:60;background:rgba(126,70,73,.1)"></div>
<div class="c red" style="--a:33;--b:60"><b class="ai"><i></i></b>PoiZone #3 - Channel volume</div>
<div class="abs" style="left:1208px;top:56px;width:482px;height:2px;background:#d9b9b9"></div>
</div>
</div>
</body></html>
